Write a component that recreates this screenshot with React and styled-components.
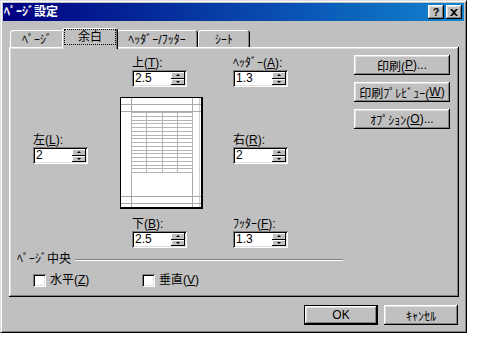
import React from 'react'
import styled, { createGlobalStyle } from 'styled-components'

const GlobalStyle = createGlobalStyle`
  body {
    margin: 0;
    background: #fff;
  }
  * {
    box-sizing: border-box;
  }
`

const raised = `
  box-shadow: inset -1px -1px #000, inset 1px 1px #fff, inset -2px -2px #808080, inset 2px 2px #dfdfdf;
`

const sunken = `
  box-shadow: inset 1px 1px #808080, inset -1px -1px #fff, inset 2px 2px #000, inset -2px -2px #dfdfdf;
`

const Window = styled.div`
  width: 467px;
  height: 333px;
  background: #c0c0c0;
  border: 1px solid;
  border-color: #dfdfdf #000 #000 #dfdfdf;
  box-shadow: inset 1px 1px #fff, inset -1px -1px #808080;
  padding: 2px;
  display: flex;
  flex-direction: column;
  font-family: "Liberation Sans", "Noto Sans CJK JP", sans-serif;
  font-size: 12px;
  color: #000;
`

const TitleBar = styled.div`
  height: 18px;
  display: flex;
  align-items: center;
  padding: 0 2px 0 1px;
  background: linear-gradient(to right, #000080, #1084d0);
  color: #fff;
  font-weight: bold;
`

const TitleText = styled.div`
  flex: 1;
  line-height: 16px;
`

const TitleButton = styled.div`
  width: 16px;
  height: 14px;
  margin-left: ${p => (p.$gap ? 2 : 0)}px;
  background: #c0c0c0;
  ${raised}
  color: #000;
  display: flex;
  align-items: center;
  justify-content: center;
  font-size: 11px;
  font-weight: bold;
  line-height: 1;
`

const Body = styled.div`
  flex: 1;
  display: flex;
  flex-direction: column;
  padding: 7px 5px 0 6px;
`

const TabStrip = styled.div`
  display: flex;
  align-items: flex-end;
  height: 21px;
  margin-bottom: -2px;
  padding-left: 1px;
  position: relative;
  z-index: 1;
`

const Tab = styled.div`
  width: ${p => p.$w}px;
  height: ${p => (p.$active ? 21 : 17)}px;
  margin: 0 ${p => (p.$active ? -2 : 0)}px ${p => (p.$active ? 0 : 2)}px;
  position: relative;
  z-index: ${p => (p.$active ? 2 : 1)};
  background: #c0c0c0;
  border-radius: 3px 3px 0 0;
  box-shadow: inset 1px 1px #fff, inset -1px 0 #000, inset -2px 0 #808080;
  display: flex;
  align-items: center;
  justify-content: center;
  padding-bottom: ${p => (p.$active ? 4 : 0)}px;
  white-space: nowrap;
`

const Focus = styled.span`
  display: inline-block;
  width: 50px;
  height: 14px;
  line-height: 14px;
  text-align: center;
  outline: 1px dotted #000;
`

const Panel = styled.div`
  height: 250px;
  ${raised}
  padding: 8px 9px 0 6px;
  display: flex;
  flex-direction: column;
`

const TopRow = styled.div`
  display: flex;
  justify-content: space-between;
  align-items: flex-start;
`

const MarginGrid = styled.div`
  display: grid;
  grid-template-columns: 55px 83px 55px;
  column-gap: 31px;
  margin: 1px 0 0 18px;
`

const Field = styled.div`
  display: flex;
  flex-direction: column;
  margin-left: ${p => p.$indent || 0}px;
  margin-top: ${p => p.$top || 0}px;
  align-self: start;
`

const Label = styled.div`
  height: 14px;
  line-height: 14px;
  white-space: nowrap;
`

const SpinBox = styled.div`
  width: 55px;
  height: 17px;
  background: #fff;
  ${sunken}
  padding: 2px;
  display: flex;
`

const SpinValue = styled.div`
  flex: 1;
  line-height: 13px;
  padding-left: 1px;
`

const SpinButtons = styled.div`
  width: 14px;
  display: flex;
  flex-direction: column;
`

const SpinButton = styled.div`
  flex: 1;
  background: #c0c0c0;
  box-shadow: inset -1px -1px #000, inset 1px 1px #fff;
  display: flex;
  align-items: center;
  justify-content: center;
  &::after {
    content: '';
    border-left: 2px solid transparent;
    border-right: 2px solid transparent;
    ${p => (p.$down ? 'border-top: 2px solid #000;' : 'border-bottom: 2px solid #000;')}
  }
`

const PreviewCell = styled.div`
  grid-column: 2;
  margin: 10px 0 0 1px;
`

const Page = styled.div`
  width: 83px;
  height: 112px;
  border: 1px solid #000;
  border-right-width: 2px;
  border-bottom-width: 2px;
  background: #fff;
  display: flex;
`

const ButtonColumn = styled.div`
  display: flex;
  flex-direction: column;
  gap: 7px;
`

const Button = styled.div`
  width: ${p => p.$w || 96}px;
  height: 20px;
  background: #c0c0c0;
  ${raised}
  display: flex;
  align-items: center;
  justify-content: center;
  white-space: nowrap;
  ${p => p.$default && `
    border: 1px solid #000;
  `}
`

const GroupHeader = styled.div`
  display: flex;
  align-items: center;
  gap: 4px;
  width: 326px;
  margin: 5px 0 0 2px;
  line-height: 13px;
`

const Etch = styled.div`
  flex: 1;
  border-top: 1px solid #808080;
  border-bottom: 1px solid #fff;
`

const CheckRow = styled.div`
  display: flex;
  margin: 8px 0 0 18px;
`

const Check = styled.label`
  display: flex;
  align-items: center;
  gap: 4px;
  width: ${p => p.$w}px;
  line-height: 13px;
`

const CheckBox = styled.span`
  width: 13px;
  height: 13px;
  background: #fff;
  ${sunken}
`

const Footer = styled.div`
  display: flex;
  justify-content: flex-end;
  gap: 6px;
  margin-top: 8px;
  padding-right: 1px;
`

const Key = ({ children }) => <u>{children}</u>

const Spin = ({ value }) => (
  <SpinBox>
    <SpinValue>{value}</SpinValue>
    <SpinButtons>
      <SpinButton />
      <SpinButton $down />
    </SpinButtons>
  </SpinBox>
)

const MarginField = ({ label, k, value, indent, top }) => (
  <Field $indent={indent} $top={top}>
    <Label>
      {label}(<Key>{k}</Key>):
    </Label>
    <Spin value={value} />
  </Field>
)

const PagePreview = () => {
  const rows = Array.from({ length: 17 }, (_, i) => 14 + i * 3.75)
  const cols = [10, 25, 41, 56, 71]
  return (
    <Page>
      <svg width="80" height="109" viewBox="0 0 80 109" shapeRendering="crispEdges">
        <g stroke="#a8a8a8" strokeWidth="1">
          <line x1="10.5" y1="0" x2="10.5" y2="109" />
          <line x1="71.5" y1="0" x2="71.5" y2="109" />
          <line x1="78.5" y1="0" x2="78.5" y2="109" stroke="#d0d0d0" />
          <line x1="0" y1="6.5" x2="80" y2="6.5" />
          <line x1="0" y1="13.5" x2="80" y2="13.5" />
          <line x1="0" y1="98.5" x2="80" y2="98.5" />
          <line x1="0" y1="105.5" x2="80" y2="105.5" />
        </g>
        <g stroke="#b4b4b4" strokeWidth="1">
          {rows.map(y => (
            <line key={y} x1="10" y1={Math.round(y) + 0.5} x2="72" y2={Math.round(y) + 0.5} />
          ))}
          {cols.map(x => (
            <line key={x} x1={x + 0.5} y1="14" x2={x + 0.5} y2="74" />
          ))}
        </g>
      </svg>
    </Page>
  )
}

const App = () => (
  <>
    <GlobalStyle />
    <Window>
      <TitleBar>
        <TitleText>ﾍﾟｰｼﾞ設定</TitleText>
        <TitleButton>?</TitleButton>
        <TitleButton $gap>
          <svg width="8" height="7" viewBox="0 0 8 7">
            <path d="M0 0h2l2 2 2-2h2L5 3.5 8 7H6L4 5 2 7H0l3-3.5z" fill="#000" />
          </svg>
        </TitleButton>
      </TitleBar>
      <Body>
        <TabStrip>
          <Tab $w={54}>ﾍﾟｰｼﾞ</Tab>
          <Tab $w={56} $active>
            <Focus>余白</Focus>
          </Tab>
          <Tab $w={82}>ﾍｯﾀﾞｰ/ﾌｯﾀｰ</Tab>
          <Tab $w={52}>ｼｰﾄ</Tab>
        </TabStrip>
        <Panel>
          <TopRow>
            <MarginGrid>
              <div />
              <MarginField label="上" k="T" value="2.5" indent={13} />
              <MarginField label="ﾍｯﾀﾞｰ" k="A" value="1.3" />
              <MarginField label="左" k="L" value="2" top={46} />
              <PreviewCell>
                <PagePreview />
              </PreviewCell>
              <MarginField label="右" k="R" value="2" top={46} />
              <div />
              <MarginField label="下" k="B" value="2.5" indent={13} top={8} />
              <MarginField label="ﾌｯﾀｰ" k="F" value="1.3" top={8} />
            </MarginGrid>
            <ButtonColumn>
              <Button>印刷(<Key>P</Key>)...</Button>
              <Button>印刷ﾌﾟﾚﾋﾞｭｰ(<Key>W</Key>)</Button>
              <Button>ｵﾌﾟｼｮﾝ(<Key>O</Key>)...</Button>
            </ButtonColumn>
          </TopRow>
          <GroupHeader>
            <span>ﾍﾟｰｼﾞ中央</span>
            <Etch />
          </GroupHeader>
          <CheckRow>
            <Check $w={109}>
              <CheckBox />
              <span>水平(<Key>Z</Key>)</span>
            </Check>
            <Check $w={120}>
              <CheckBox />
              <span>垂直(<Key>V</Key>)</span>
            </Check>
          </CheckRow>
        </Panel>
        <Footer>
          <Button $w={74} $default>OK</Button>
          <Button $w={74}>ｷｬﾝｾﾙ</Button>
        </Footer>
      </Body>
    </Window>
  </>
)

export default App
